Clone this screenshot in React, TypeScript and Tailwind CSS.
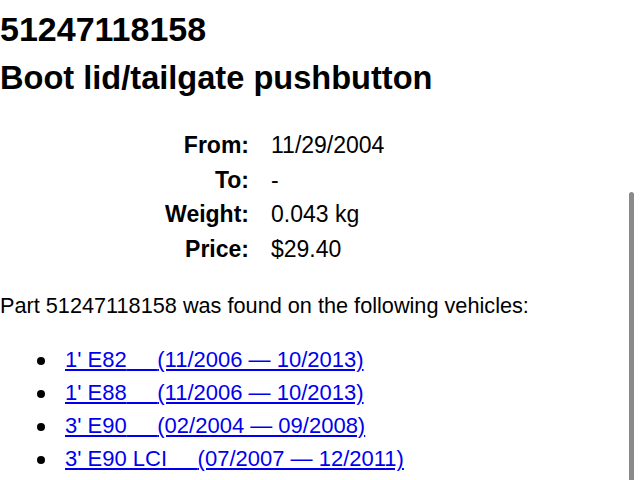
import React from "react";

const rows = [
  ["From:", "11/29/2004"],
  ["To:", "-"],
  ["Weight:", "0.043 kg"],
  ["Price:", "$29.40"],
];

const vehicles = [
  ["1' E82", "(11/2006 — 10/2013)"],
  ["1' E88", "(11/2006 — 10/2013)"],
  ["3' E90", "(02/2004 — 09/2008)"],
  ["3' E90 LCI", "(07/2007 — 12/2011)"],
];

export default function App() {
  const gap = "\u00a0\u00a0\u00a0\u00a0\u00a0";
  return (
    <div
      className="relative h-[480px] w-[640px] overflow-hidden bg-white text-black"
      style={{ fontFamily: '"Liberation Sans", Arial, Helvetica, sans-serif' }}
    >
      <div className="pt-[10px]">
        <h1 className="text-[34px] font-bold leading-[38px]">51247118158</h1>
        <h2 className="mt-[11px] text-[32.6px] font-bold leading-[38px]">
          Boot lid/tailgate pushbutton
        </h2>
        <div className="mt-[31px] flex flex-col text-[23px] leading-[34.5px]">
          {rows.map(([k, v]) => (
            <div key={k} className="flex">
              <span className="w-[249px] text-right font-bold">{k}</span>
              <span className="pl-[22px]">{v}</span>
            </div>
          ))}
        </div>
        <p className="mt-[27px] text-[21.7px] leading-[25px]">
          Part 51247118158 was found on the following vehicles:
        </p>
        <ul className="mt-[25px] text-[22px] leading-[33px]">
          {vehicles.map(([m, d]) => (
            <li key={m} className="pl-[37px]">
              <span className="mr-[20px] inline-block h-[8px] w-[8px] rounded-full bg-black align-middle" />
              <a href="#" className="text-[#0000ee] underline">
                {m}
                {gap}
                {d}
              </a>
            </li>
          ))}
        </ul>
      </div>
      <div className="absolute right-[6px] top-[192px] h-[300px] w-[5px] rounded-full bg-[#8a8a8a]" />
    </div>
  );
}
